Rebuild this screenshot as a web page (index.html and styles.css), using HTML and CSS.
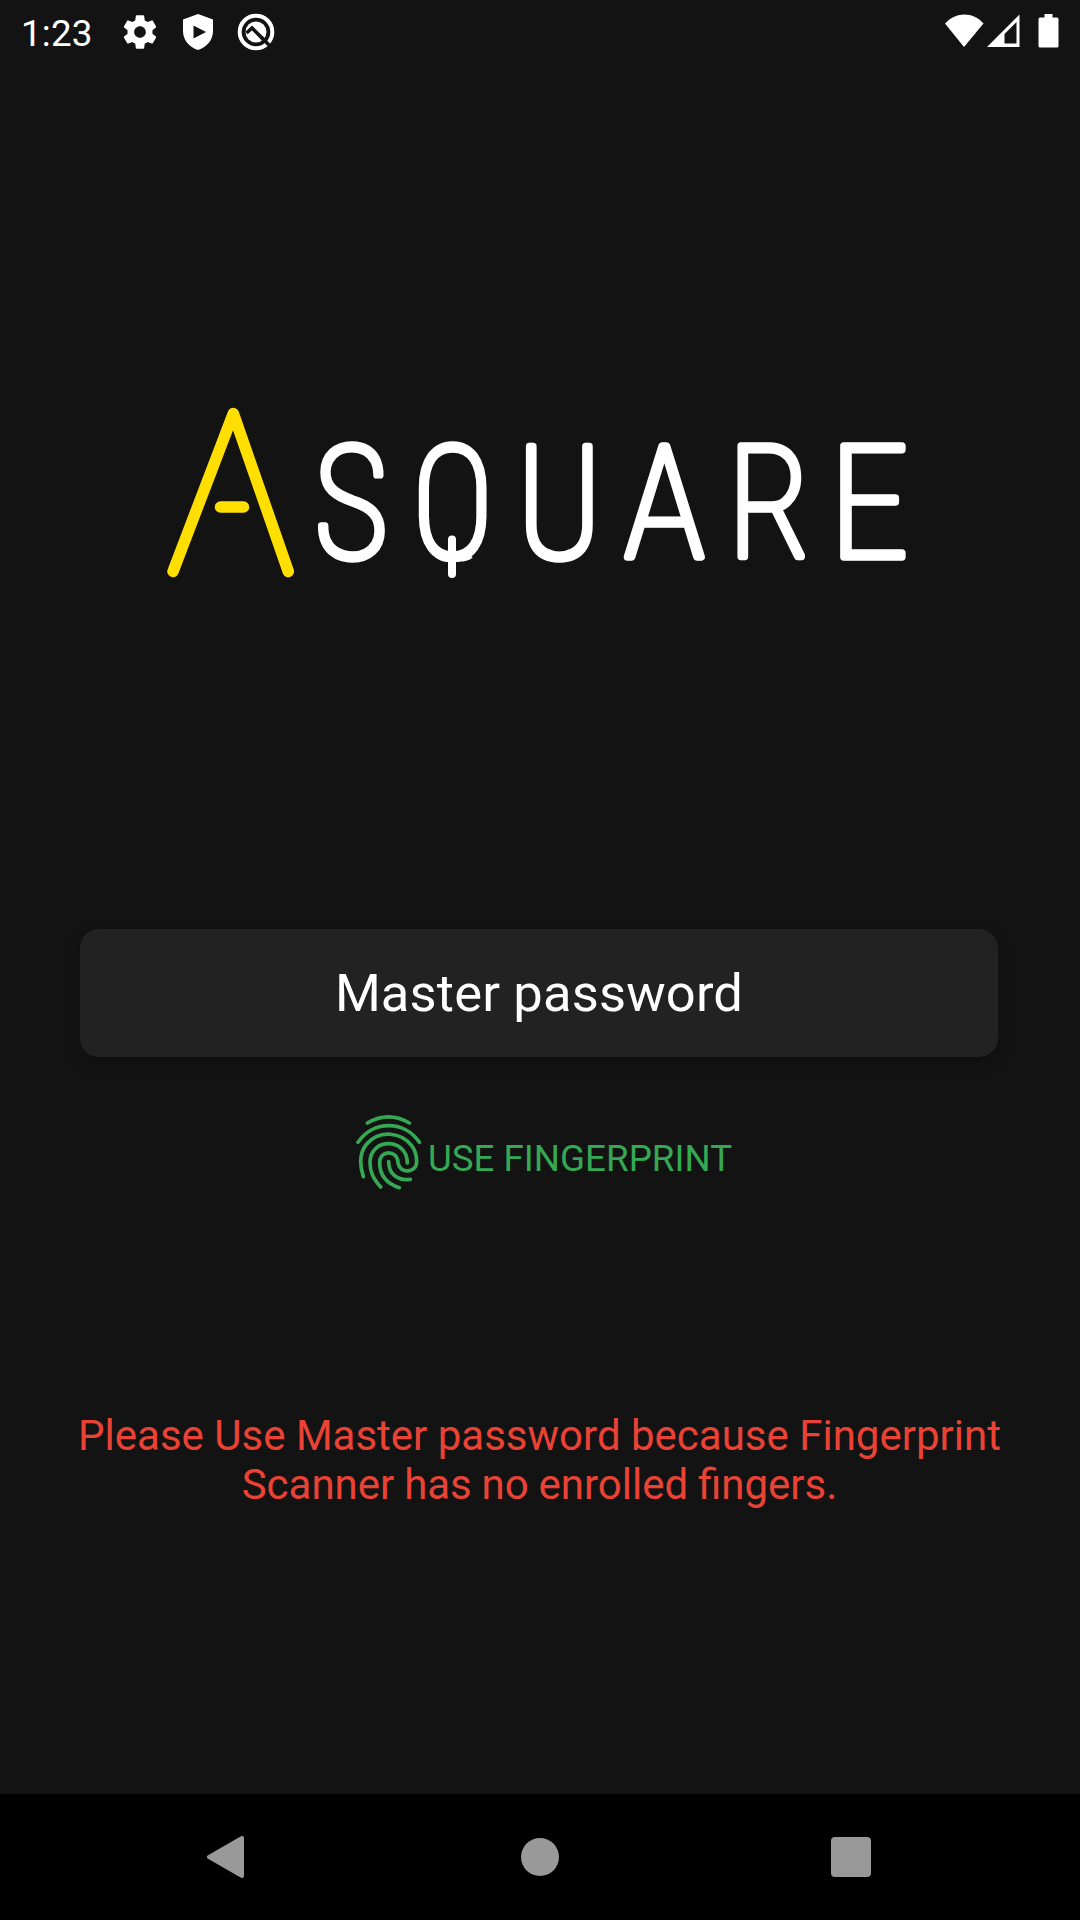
FILE: index.html
```html
<!DOCTYPE html>
<html lang="en">
<head>
<meta charset="utf-8">
<title>Asquare</title>
<link rel="stylesheet" href="styles.css">
</head>
<body>
<div class="screen">
  <header class="status">
    <span class="clock">1:23</span>
    <svg class="gear" width="40" height="40" viewBox="0 0 24 24"><path fill="#fff" d="M19.43 12.98c.04-.32.07-.64.07-.98s-.03-.66-.07-.98l2.11-1.65c.19-.15.24-.42.12-.64l-2-3.46c-.12-.22-.39-.3-.61-.22l-2.49 1c-.52-.4-1.08-.73-1.69-.98l-.38-2.65C14.46 2.18 14.25 2 14 2h-4c-.25 0-.46.18-.49.42l-.38 2.65c-.61.25-1.17.59-1.69.98l-2.49-1c-.23-.09-.49 0-.61.22l-2 3.46c-.13.22-.07.49.12.64l2.11 1.65c-.04.32-.07.65-.07.98s.03.66.07.98l-2.11 1.65c-.19.15-.24.42-.12.64l2 3.46c.12.22.39.3.61.22l2.49-1c.52.4 1.08.73 1.69.98l.38 2.65c.03.24.24.42.49.42h4c.25 0 .46-.18.49-.42l.38-2.65c.61-.25 1.17-.59 1.69-.98l2.49 1c.23.09.49 0 .61-.22l2-3.46c.12-.22.07-.49-.12-.64l-2.11-1.65zM12 15.5c-1.93 0-3.5-1.57-3.5-3.5s1.57-3.5 3.5-3.5 3.5 1.57 3.5 3.5-1.57 3.5-3.5 3.5z"/></svg>
    <svg class="shield" width="30" height="36" viewBox="0 0 30 36"><path fill="#fff" fill-rule="evenodd" d="M15 0 30 5.500V17C30 26 24 33 15 36 6 33 0 26 0 17V5.500ZM10.500 11.500V24.500L23 18Z"/></svg>
    <svg class="q" width="38" height="38" viewBox="0 0 38 38"><circle cx="19" cy="19" r="16.300" fill="none" stroke="#fff" stroke-width="4"/><circle cx="19" cy="19" r="10.500" fill="#fff"/><path d="m9.500 20 5.500-5 11 11" fill="none" stroke="#131313" stroke-width="3.500"/><path d="m24 24 9 9" stroke="#131313" stroke-width="3.500"/></svg>
    <svg class="signals" width="116" height="36" viewBox="0 0 116 36"><path fill="#fff" d="M1 9.500C12-2.500 29-2.500 39.500 9.500L20 33Z"/><path fill="#fff" fill-rule="evenodd" d="M75.500.500V33H43ZM72.500 8 60.500 20V29.500H72.500Z"/><path fill="#fff" d="M100.500 0h8v3.500h4.500q1.500 0 1.500 1.500v27q0 1.500-1.500 1.500h-17q-1.500 0-1.500-1.500V5q0-1.500 1.500-1.500h4.500Z"/></svg>
  </header>
  <main>
    <svg class="logo" width="760" height="230" viewBox="160 400 760 230" aria-label="Asquare">
      <clipPath id="bowl"><rect x="414" y="430" width="76" height="132" rx="33"/></clipPath>
      <g class="mark"><path d="M173 571.500 233.300 413.500 288.300 571.500M220.500 507h23"/></g>
      <g class="word">
        <text transform="translate(314.500 556.500) scale(.9 1)">S</text>
        <g clip-path="url(#bowl)"><text transform="translate(413 556.500) scale(.87 1)">Q</text></g>
        <text transform="translate(517 556.500) scale(.93 1)">U</text>
        <text transform="translate(624 556.500) scale(.98 1)">A</text>
        <text transform="translate(728 556.500) scale(.93 1)">R</text>
        <text transform="translate(829.500 556.500) scale(1.01 1)">E</text>
      </g>
      <line class="tail" x1="452" y1="539.500" x2="452" y2="574"/>
    </svg>
    <div class="field">Master password</div>
    <div class="finger">
      <svg width="68" height="78" viewBox="354 1112 68 78"><g transform="translate(340 1100) scale(.33333)"><path d="M82 69Q146 32 208 69M54 127C98 60 194 60 238 127M70 230C57 190 61 155 80 132 119 87 185 97 215 137 225 150 230 168 230 185 230 220 178 223 174 187 172 149 119 149 119 187 119 224 139 251 178 263M122 261C98 234 90 215 90 187 90 112 202 112 202 189M146 185C146 222 173 243 211 238"/></g></svg>
      <span>USE FINGERPRINT</span>
    </div>
    <p class="error">Please Use Master password because Fingerprint<br><span>Scanner has no enrolled fingers.</span></p>
  </main>
  <nav>
    <svg width="38" height="44" viewBox="0 0 38 44"><path d="M2 22 35 3v38Z" fill="#999" stroke="#999" stroke-width="4" stroke-linejoin="round"/></svg>
    <span class="home"></span>
    <span class="recent"></span>
  </nav>
</div>
</body>
</html>
```
FILE: styles.css
```css
* { box-sizing: border-box; }
body { margin: 0; background: #131313; font-family: Roboto, sans-serif; color: #fff; }
svg { display: block; flex: none; }
.screen { width: 1080px; height: 1920px; display: flex; flex-direction: column; overflow: hidden; }
.status { height: 63px; display: flex; align-items: flex-start; padding: 13px 20px 0 21px; }
.clock { width: 99px; padding-top: 1px; font-size: 36.75px; letter-spacing: .2px; line-height: 40px; }
.gear { margin-top: -1px; }
.shield { margin: 1px 0 0 23px; }
.q { margin-left: 23.500px; }
.signals { margin: 1px 0 0 auto; }
main { flex: 1; display: flex; flex-direction: column; align-items: center; padding-top: 337px; }
.mark { fill: none; stroke: #ffdf00; stroke-width: 11.500px; stroke-linecap: round; stroke-linejoin: round; }
.word { font: 100 156px Roboto, sans-serif; font-stretch: 75%; fill: #fff; stroke: #fff; stroke-width: 7.500px; stroke-linejoin: round; }
.tail { stroke: #fff; stroke-width: 8px; stroke-linecap: round; }
.field { width: 918px; height: 128px; margin: 299px 2px 0 0; border-radius: 19px; background: #222; display: flex; align-items: center; justify-content: center; font-size: 52.500px; letter-spacing: .16px; box-shadow: 0 6px 16px rgba(0, 0, 0, .18); }
.finger { display: flex; align-items: center; gap: 6px; margin: 55px 0 0 6px; font-size: 36.75px; line-height: 44px; color: #34a853; }
.finger svg path { fill: none; stroke: #34a853; stroke-width: 11; stroke-linecap: round; }
.finger span { padding-top: 15px; }
.error { margin: 221px 1px 0 0; text-align: center; font-size: 42px; line-height: 49px; color: #ea4335; }
.error span { word-spacing: -.6px; }
nav { height: 126px; background: #000; display: flex; align-items: center; padding-left: 207px; }
.home { width: 38px; height: 38px; border-radius: 50%; background: #999; margin-left: 276px; }
.recent { width: 40px; height: 40px; border-radius: 4px; background: #999; margin-left: 272px; }
```
